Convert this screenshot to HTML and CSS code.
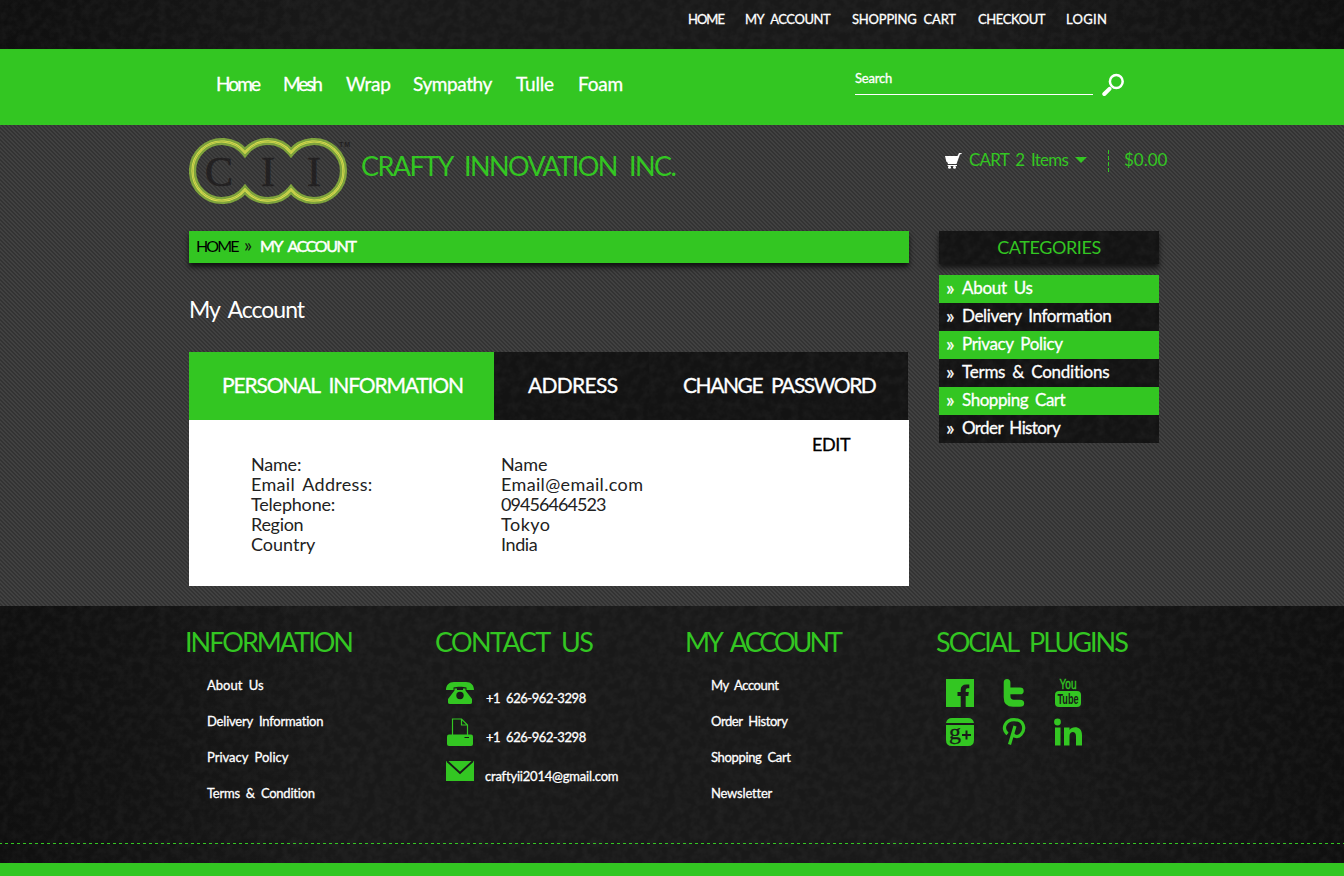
FILE: index.html
```html
<!DOCTYPE html>
<html lang="en">
<head>
<meta charset="utf-8">
<title>My Account - Crafty Innovation Inc.</title>
<link rel="stylesheet" href="styles.css">
</head>
<body>
<header class="topbar dark wide">
  <nav class="toplinks">
    <a class="t1">HOME</a><a class="t2">MY ACCOUNT</a><a class="t3">SHOPPING CART</a><a class="t4">CHECKOUT</a><a class="t5">LOGIN</a>
  </nav>
</header>
<div class="mainbar">
  <nav class="mainnav">
    <a class="n1">Home</a><a class="n2">Mesh</a><a class="n3">Wrap</a><a class="n4">Sympathy</a><a class="n5">Tulle</a><a class="n6">Foam</a>
  </nav>
  <div class="search"><span>Search</span></div>
  <svg class="glass" width="24" height="24" viewBox="0 0 24 24" fill="none" stroke="#fff"><circle cx="14.300" cy="8.500" r="6.400" stroke-width="2.500"/><path d="M2.300 21 7.500 15.800" stroke-width="4" stroke-linecap="round"/></svg>
</div>
<main class="page">
  <div class="brand">
    <svg class="logo" width="164" height="70" viewBox="0 0 164 70">
      <defs><path id="ring" d="M56 15.500A29.500 29.500 0 1 0 56 52.500A29.500 29.500 0 0 0 102 52.500A29.500 29.500 0 1 0 102 15.500A29.500 29.500 0 0 0 56 15.500Z" fill="none"/></defs>
      <use href="#ring" stroke="#7ea33d" stroke-width="7.200"/>
      <use href="#ring" stroke="#dfe04e" stroke-width="2.200"/>
      <use href="#ring" stroke="#86a63e" stroke-width=".6"/>
      <g class="cii"><text x="16" y="49" textLength="30">C</text><text x="72" y="49" textLength="15">I</text><text x="118" y="49" textLength="15">I</text></g>
      <text class="tm" x="150" y="10" textLength="11">TM</text>
    </svg>
    <div class="company">CRAFTY INNOVATION INC.</div>
    <div class="cart">
      <svg width="17" height="16" viewBox="0 0 17 16" fill="#fff"><path d="M0 3H12.500L14 0H17L16 1.200H15L11.500 11H3L2.500 9.500 1.300 8.500Z"/><path d="M2.500 12H12V13H2.500Z"/><circle cx="4.500" cy="14.200" r="1.500"/><circle cx="9.500" cy="14.200" r="1.500"/></svg>
      <span class="items">CART 2 Items</span><i class="caret"></i><i class="divider"></i><span class="price">$0.00</span>
    </div>
  </div>
  <div class="columns">
    <section class="content">
      <div class="crumbs"><a class="c1">HOME</a><span class="c2">»</span><b class="c3">MY ACCOUNT</b></div>
      <h1>My Account</h1>
      <div class="tabs"><a class="tab on">PERSONAL INFORMATION</a><a class="tab address dark">ADDRESS</a><a class="tab password dark">CHANGE PASSWORD</a></div>
      <div class="panel">
        <dl>
          <dt class="d1">Name:</dt><dd class="e1">Name</dd>
          <dt class="d2">Email Address:</dt><dd class="e2">Email@email.com</dd>
          <dt class="d3">Telephone:</dt><dd class="e3">09456464523</dd>
          <dt class="d4">Region</dt><dd class="e4">Tokyo</dd>
          <dt class="d5">Country</dt><dd class="e5">India</dd>
        </dl>
        <a class="edit">EDIT</a>
      </div>
    </section>
    <aside class="side">
      <h2 class="dark">CATEGORIES</h2>
      <ul>
        <li><i>»</i><span class="s1">About Us</span></li>
        <li class="dark"><i>»</i><span class="s2">Delivery Information</span></li>
        <li><i>»</i><span class="s3">Privacy Policy</span></li>
        <li class="dark"><i>»</i><span class="s4">Terms &amp; Conditions</span></li>
        <li><i>»</i><span class="s5">Shopping Cart</span></li>
        <li class="dark"><i>»</i><span class="s6">Order History</span></li>
      </ul>
    </aside>
  </div>
</main>
<footer class="footer dark wide">
  <div class="fcols">
    <section class="info"><h3 class="h1">INFORMATION</h3><ul class="links"><li class="f1">About Us</li><li class="f2">Delivery Information</li><li class="f3">Privacy Policy</li><li class="f4">Terms &amp; Condition</li></ul></section>
    <section class="contact"><h3 class="h2">CONTACT US</h3>
      <div class="row"><svg width="28" height="28" viewBox="0 0 28 28"><path fill="#33c622" d="M0 8C0 3 3 0 8 0H20C25 0 28 3 28 8H20.500V5.500C17 4.500 11 4.500 7.500 5.500V8ZM8.500 6.500H11V8H17V6.500H19.500V8.500L26 17V20.500Q26 22 24 22H4Q2 22 2 20.500V17L8.500 8.500Z"/><circle cx="14" cy="13.500" r="3.700" fill="#191919"/></svg><span class="p1">+1 626-962-3298</span></div>
      <div class="row"><svg class="up" width="28" height="28" viewBox="0 0 28 28"><path d="M6.500 17V1H15.500L21.500 7V17M15.500 1V7H21.500" fill="none" stroke="#33c622" stroke-width="1.200"/><path fill="#33c622" d="M3 16.500H25Q27 16.500 27 18.500V26Q27 28 25 28H3Q1 28 1 26V18.500Q1 16.500 3 16.500Z"/><path d="M18.500 19.500H23" stroke="#191919"/></svg><span class="p1">+1 626-962-3298</span></div>
      <div class="row"><svg class="up" width="28" height="28" viewBox="0 0 28 28"><path fill="#33c622" d="M0 4H28V24H0Z"/><path d="M1 4 14 16 27 4" fill="none" stroke="#191919" stroke-width="1.900"/></svg><span class="p3">craftyii2014@gmail.com</span></div>
    </section>
    <section class="account"><h3 class="h3">MY ACCOUNT</h3><ul class="links"><li class="f5">My Account</li><li class="f6">Order History</li><li class="f7">Shopping Cart</li><li class="f8">Newsletter</li></ul></section>
    <section class="social"><h3 class="h4">SOCIAL PLUGINS</h3>
      <div class="icons">
        <svg viewBox="0 0 28 28"><path d="M0 0H28V28H19.700V17H22.300L22.800 13H19.700V11Q19.700 9.300 21.500 9.300H23.300V5.500H20.500Q14.700 5.500 14.700 11V13H11.500V17H14.700V28H0Z"/></svg>
        <svg viewBox="0 0 28 28"><path d="M3.700 3.500Q3.700 0 7 0T10.400 3.500V8.500H20Q23.700 8.500 23.700 11.900T20 15.300H10.400V17Q10.400 20.800 14 20.800H20Q24.200 20.800 24.200 24.300T20 27.800H13Q3.700 27.800 3.700 18.500Z"/></svg>
        <svg viewBox="0 0 28 28"><text class="you" x="5.500" y="10" textLength="17" lengthAdjust="spacingAndGlyphs">You</text><rect x="1" y="12" width="26" height="16" rx="4"/><text class="tube" x="3.500" y="25" textLength="21" lengthAdjust="spacingAndGlyphs">Tube</text></svg>
        <svg viewBox="0 0 28 28"><path d="M0 5Q1 0 6 0H22Q27 0 28 5ZM0 7H28V22Q28 28 22 28H6Q0 28 0 22Z"/><text class="gp" x="3" y="20.500" textLength="12" lengthAdjust="spacingAndGlyphs">g</text><path d="M20.500 12.500V21.500M16 17H25" stroke="#191919" stroke-width="2"/></svg>
        <svg viewBox="0 0 28 28"><path d="M7.500 16C1 10 6 1.600 14 1.600C24 1.600 26 11 21 16.500C18 20 13 18.500 13 15.500M15 8 9.500 26.500" fill="none" stroke="#33c622" stroke-width="3.200"/></svg>
        <svg viewBox="0 0 28 28"><circle cx="3.500" cy="4" r="3.400"/><path d="M1 9.500H6.500V27.500H1ZM10 9.500H15.500V12C18 8 28 7.500 28 17V27.500H22V18C22 12.500 15.500 13 15.500 18V27.500H10Z"/></svg>
      </div>
    </section>
  </div>
  <div class="dash"></div>
</footer>
<div class="bottom"></div>
</body>
</html>
```
FILE: styles.css
```css
*{box-sizing:border-box}
body{margin:0;width:1344px;height:876px;overflow:hidden;background:#393939;color:#fff;font-family:Lato,"Open Sans",sans-serif;font-variant-ligatures:none;font-kerning:normal;word-spacing:3px;white-space:nowrap}
h1,h2,h3,ul,dl,dd{margin:0;padding:0;font-weight:400;list-style:none}
i{font-style:normal}
.dark{--grain:url("data:image/svg+xml,%3Csvg xmlns='http://www.w3.org/2000/svg' width='300' height='300'%3E%3Cfilter id='n' x='0' y='0' width='100%25' height='100%25'%3E%3CfeTurbulence type='fractalNoise' baseFrequency='.12' numOctaves='3' stitchTiles='stitch'/%3E%3CfeColorMatrix values='0 0 0 0 1 0 0 0 0 1 0 0 0 0 1 .08 0 0 0 -.03'/%3E%3C/filter%3E%3Crect width='300' height='300' filter='url(%23n)'/%3E%3C/svg%3E");background:var(--grain) #131313}
.wide{background:var(--grain),linear-gradient(90deg,#0f0f0f,#191919 25%,#191919 75%,#0f0f0f)}
.topbar{height:49px;padding:9px 0 0 688px}
.toplinks,.mainnav,.side li,.links,.row,.tabs,.search{-webkit-text-stroke:.3px currentColor}
.toplinks{display:flex;font-size:13px;line-height:20px;word-spacing:4px}
.t1{width:57px;letter-spacing:-1px}.t2{width:107px;letter-spacing:-.45px}.t3{width:126px;letter-spacing:-.2px}.t4{width:88px;letter-spacing:-.4px}.t5{letter-spacing:.3px}
.mainbar{height:76px;background:#33c622;display:flex;padding-left:216px}
.mainnav{display:flex;width:639px;padding-top:23px;font-size:19px;line-height:24px}
.n1{width:67px;letter-spacing:-1.9px}.n2{width:63px;letter-spacing:-2.100px}.n3{width:67px;letter-spacing:-.3px}.n4{width:103px;letter-spacing:-.4px}.n5{width:62px;letter-spacing:-.2px}.n6{letter-spacing:-.2px}
.search{width:238px;height:46px;border-bottom:1px solid #fff;padding-top:19px;font-size:13px;line-height:20px;letter-spacing:-.2px}
.glass{margin:24px 0 0 9px}
.page{height:481px;padding:12px 0 0 189px;background:linear-gradient(45deg,#333 25%,#414141 25% 50%,#333 50% 75%,#414141 75%) 0 0/4px 4px}
.brand{display:flex;height:94px}
.logo{display:block}
.cii{font:42px "Liberation Serif",serif;fill:#232122;stroke:#232122;stroke-width:.6}
.tm{font:bold 7px "Liberation Sans",sans-serif;fill:#232122}
.company{width:592px;padding:12px 0 0 8px;font-size:27px;line-height:34px;color:#33c622;letter-spacing:-1.6px;word-spacing:7px}
.cart{display:flex;padding-top:13px;font-size:17px;line-height:20px;color:#33c622}
.cart svg{margin:3px 7px 0 0}
.items{width:100px;letter-spacing:-.75px}
.caret{border:6px solid transparent;border-top-color:#33c622;border-bottom:0;height:6px;margin:7px 0 0 6px}
.divider{width:1px;height:22px;background:repeating-linear-gradient(#33c622 0 4px,transparent 4px 6px);margin:0 15px 0 21px}
.columns{display:flex;gap:30px}
.content{width:720px}
.crumbs{display:flex;height:32px;background:#33c622;padding:4px 7px;font-size:16px;line-height:21px;box-shadow:0 4px 5px #111}
.c1{color:#000;width:42px;letter-spacing:-1.9px}
.c2{width:22px;padding-left:6px;color:#111;font-size:19px;line-height:19px}
.c3{font-weight:400;letter-spacing:-1.4px;word-spacing:4px;-webkit-text-stroke:.5px #fff}
h1{font-size:23px;line-height:30px;margin:31px 0 28px;letter-spacing:-1px;word-spacing:4px}
.tabs{display:flex;width:719px;height:68px;font-size:21px;line-height:66px;word-spacing:5px}
.tab{padding-left:34px}
.on{width:305px;padding-left:33px;background-color:#33c622;letter-spacing:-1.150px}.address{width:155px;letter-spacing:-.7px}.password{width:259px;letter-spacing:-1.450px}
.panel{display:flex;height:166px;background:#fff;color:#222;padding:34px 0 0 62px;font-size:18px}
dl{display:grid;grid-template-columns:250px 311px;grid-auto-rows:20px;line-height:20px}
.d1,.d3{letter-spacing:-.2px}.d2{letter-spacing:.3px}.d4{letter-spacing:-.3px}
.e1{letter-spacing:-.1px}.e2{letter-spacing:.35px}.e3{letter-spacing:-.95px}.e4{letter-spacing:.5px}.e5{letter-spacing:-.4px}
.edit{color:#000;margin-top:-20px;line-height:20px;height:20px;letter-spacing:-.4px;-webkit-text-stroke:.3px #000}
.side{width:220px}
h2{height:33px;text-align:center;color:#33c622;font-size:18px;line-height:33px;box-shadow:0 4px 5px #151515;margin-bottom:11px;letter-spacing:-.4px}
.side li{display:flex;height:28px;line-height:26px;padding-left:7px;font-size:17px}
.side li:nth-child(odd){background-color:#33c622}
.side i{width:16px;font-size:20px;line-height:24px}
.s1{letter-spacing:-.3px}.s2,.s3{letter-spacing:-.35px}.s4{letter-spacing:-.25px}.s5{letter-spacing:-.45px}.s6{letter-spacing:-.6px}
.footer{height:257px}
.fcols{display:flex;height:237px;padding:19px 0 0 185px}
.info,.contact{width:250px}.account{width:251px}
h3{font-size:27px;line-height:34px;height:32px;color:#33c622;word-spacing:7px}
.h1{letter-spacing:-2px}.h2{letter-spacing:-1.6px}.h3{letter-spacing:-3px}.h4{letter-spacing:-2px}
.links{padding:18px 0 0 22px;font-size:13px;line-height:20px}
.links li{height:36px}.account .links{padding-left:26px}
.f2{letter-spacing:-.2px}.f4{letter-spacing:-.25px}.f5{letter-spacing:-.4px}.f6{letter-spacing:-.4px}.f7{letter-spacing:-.35px}.f8{letter-spacing:-.2px}
.row{display:flex;height:39px;padding-left:11px;font-size:13px}
.row:nth-child(2){margin-top:25px}
.row svg{margin-right:12px}
.row .up{margin-top:-3px}
.row span{line-height:20px;padding-top:6px}
.p1{letter-spacing:-.450px}.p3{letter-spacing:-.2px;margin-left:-1px}
.icons{display:grid;grid-template-columns:54px 54px 28px;gap:11px 0;padding:22px 0 0 10px}
.icons svg{display:block;width:28px;height:28px;fill:#33c622;overflow:visible;word-spacing:0}
.you{font:14px "Liberation Sans",sans-serif;stroke:#33c622;stroke-width:.4}
.tube{font:bold 14px "Liberation Sans",sans-serif;fill:#191919}
.gp{font:22px "Liberation Serif",serif;fill:#191919;stroke:#191919;stroke-width:.3}
.dash{height:1px;background:repeating-linear-gradient(90deg,#33c622 0 2px,transparent 2px 5px,#33c622 5px 6px)}
.bottom{height:13px;background:#33c622}
```
